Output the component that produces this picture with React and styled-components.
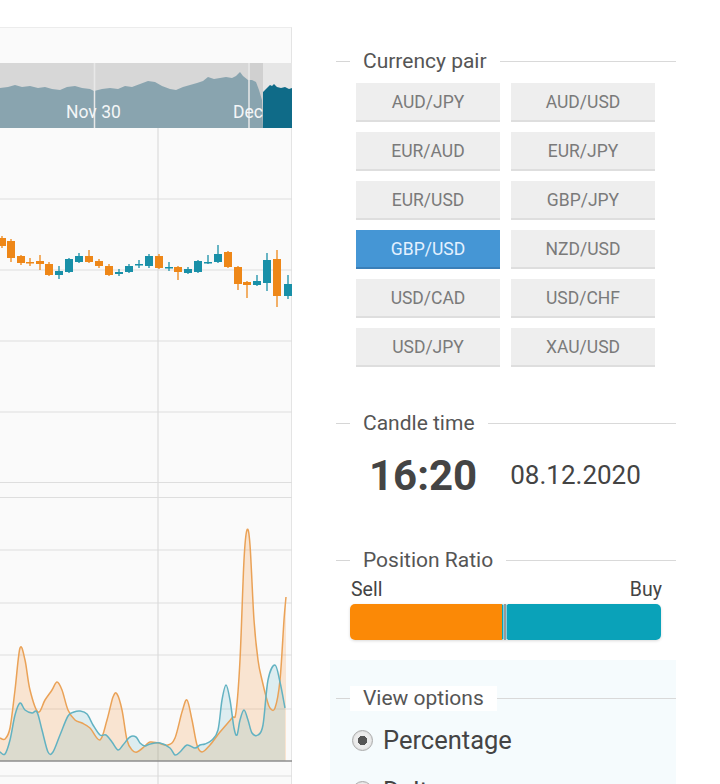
import React from 'react';
import styled, { createGlobalStyle } from 'styled-components';

const GlobalStyle = createGlobalStyle`
  html, body {
    margin: 0;
    padding: 0;
    background: #ffffff;
    font-family: Roboto, "Liberation Sans", Arial, sans-serif;
    overflow: hidden;
  }
`;

const PAIRS = [
  'AUD/JPY', 'AUD/USD', 'EUR/AUD', 'EUR/JPY', 'EUR/USD', 'GBP/JPY',
  'GBP/USD', 'NZD/USD', 'USD/CAD', 'USD/CHF', 'USD/JPY', 'XAU/USD',
];

// x, open, close, high, low
const CANDLES = [
  [2, 238, 246, 236, 248], [11, 241, 258, 239, 262], [21, 256, 263, 255, 265],
  [30, 262, 263, 258, 266], [40, 261, 264, 255, 270], [49, 264, 275, 262, 276],
  [59, 275, 271, 266, 279], [69, 272, 259, 258, 273], [79, 262, 256, 253, 263],
  [89, 256, 262, 250, 263], [99, 261, 266, 259, 268], [109, 266, 275, 264, 276],
  [119, 274, 272, 269, 276], [129, 272, 266, 264, 273], [139, 265, 264, 260, 268],
  [149, 266, 256, 254, 268], [159, 256, 268, 254, 269], [169, 268, 267, 262, 271],
  [178, 267, 272, 266, 280], [188, 273, 269, 267, 274], [198, 272, 261, 260, 273],
  [208, 263, 262, 255, 264], [218, 262, 254, 245, 263], [228, 252, 267, 251, 268],
  [238, 267, 284, 266, 290], [247, 282, 285, 281, 298], [257, 285, 281, 275, 286],
  [267, 283, 260, 253, 291], [277, 259, 296, 250, 307], [288, 296, 284, 275, 299],
];

const ORANGE_PTS = [
  [0, 738], [5, 739], [10, 728], [15, 690], [20, 648], [25, 660], [30, 690], [38, 712],
  [45, 700], [52, 690], [57, 682], [62, 690], [68, 710], [75, 720], [82, 723], [90, 728],
  [100, 740], [107, 720], [113, 697], [117, 694], [122, 710], [127, 740], [132, 750],
  [137, 752], [145, 746], [150, 742], [158, 743], [168, 745], [175, 738], [182, 712],
  [187, 700], [192, 720], [197, 745], [202, 752], [210, 745], [220, 732], [232, 718],
  [236, 712], [240, 660], [244, 560], [247, 530], [250, 545], [254, 620], [258, 660],
  [262, 680], [267, 700], [270, 708], [275, 708], [280, 680], [284, 620], [286, 597],
];

const TEAL_PTS = [
  [0, 752], [5, 754], [10, 740], [15, 715], [20, 703], [25, 710], [32, 713], [37, 712],
  [42, 730], [48, 752], [53, 752], [60, 735], [68, 716], [74, 712], [80, 711], [87, 714],
  [93, 725], [100, 735], [106, 735], [112, 742], [118, 750], [123, 745], [130, 737],
  [136, 737], [140, 743], [145, 746], [150, 744], [160, 743], [170, 748], [175, 755],
  [180, 752], [187, 745], [195, 748], [200, 745], [205, 744], [212, 740], [218, 730],
  [222, 700], [226, 685], [230, 700], [234, 728], [237, 735], [240, 720], [244, 710],
  [248, 720], [252, 733], [258, 735], [263, 725], [268, 680], [275, 665], [280, 682],
  [285, 708],
];

// smooth curve through points (catmull-rom -> bezier)
const smooth = (pts) => {
  let d = `M${pts[0][0]},${pts[0][1]}`;
  for (let i = 0; i < pts.length - 1; i++) {
    const p0 = pts[i - 1] || pts[i];
    const p1 = pts[i];
    const p2 = pts[i + 1];
    const p3 = pts[i + 2] || p2;
    const c1x = p1[0] + (p2[0] - p0[0]) / 6;
    const c1y = p1[1] + (p2[1] - p0[1]) / 6;
    const c2x = p2[0] - (p3[0] - p1[0]) / 6;
    const c2y = p2[1] - (p3[1] - p1[1]) / 6;
    d += ` C${c1x},${c1y} ${c2x},${c2y} ${p2[0]},${p2[1]}`;
  }
  return d;
};

const area = (pts, base) => {
  const last = pts[pts.length - 1];
  return `${smooth(pts)} L${last[0]},${base} L${pts[0][0]},${base} Z`;
};

const Page = () => (
  <Layout>
    <GlobalStyle />
    <ChartPanel>
      <Navigator />
      <PriceChart />
      <IndicatorChart />
    </ChartPanel>
    <SidePanel>
      <Section>
        <Legend title="Currency pair" />
        <PairGrid>
          {PAIRS.map((p) => (
            <PairButton key={p} $active={p === 'GBP/USD'}>{p}</PairButton>
          ))}
        </PairGrid>
      </Section>

      <Section $top={43}>
        <Legend title="Candle time" />
        <TimeRow>
          <Clock>16:20</Clock>
          <DateText>08.12.2020</DateText>
        </TimeRow>
      </Section>

      <Section $top={47}>
        <Legend title="Position Ratio" />
        <RatioLabels>
          <span>Sell</span>
          <span>Buy</span>
        </RatioLabels>
        <RatioBar>
          <SellPart style={{ width: '49%' }} />
          <BuyPart />
          <Cursor viewBox="0 0 10 40">
            <path d="M2 1h6M5 1v38M2 39h6" stroke="#fff" strokeWidth="3" fill="none" />
            <path d="M2 1h6M5 1v38M2 39h6" stroke="#555" strokeWidth="1.2" fill="none" />
          </Cursor>
        </RatioBar>
      </Section>

      <OptionsBox>
        <Legend title="View options" boxed />
        <RadioRow>
          <Radio $checked />
          <RadioLabel>Percentage</RadioLabel>
        </RadioRow>
        <RadioRow>
          <Radio />
          <RadioLabel>Delta</RadioLabel>
        </RadioRow>
      </OptionsBox>
    </SidePanel>
  </Layout>
);

const Legend = ({ title, boxed }) => (
  <LegendRow>
    <LegendStub />
    <LegendText $boxed={boxed}>{title}</LegendText>
    <LegendLine />
  </LegendRow>
);

const NAV_DARK =
  'M263,92 L266,89 L268,87 L270,85 L272,86 L274,84 L277,87 L281,88 L285,87 L289,89 L292,88 L292,128 L263,128 Z';

const Navigator = () => (
  <NavSvg viewBox="0 63 292 65" preserveAspectRatio="none">
    <rect x="0" y="63" width="292" height="65" fill="#d7d7d7" />
    <rect x="250" y="63" width="13" height="65" fill="#d0d0d0" />
    <rect x="263" y="63" width="29" height="65" fill="#e6e6e6" />
    <path
      d="M0,88 L8,87 L15,85 L22,87 L30,86 L38,88 L45,87 L52,89 L60,90 L67,87 L75,86 L82,88 L90,89 L94,91
         L102,89 L110,88 L118,89 L125,86 L132,87 L140,84 L148,81 L155,82 L162,86 L170,89 L176,90
         L183,87 L190,85 L197,83 L203,81 L208,77 L214,79 L220,78 L226,77 L232,78 L236,76 L240,72 L243,76
         L248,80 L252,80 L256,82 L259,90 L262,100 L263,128 L0,128 Z"
      fill="#89a4af"
    />
    <line x1="94.5" y1="63" x2="94.5" y2="128" stroke="#e8e8e8" strokeWidth="1.5" />
    <line x1="249" y1="63" x2="249" y2="128" stroke="#e8e8e8" strokeWidth="1.5" />
    <NavLabel x="66" y="118">Nov 30</NavLabel>
    <NavLabel x="233" y="118">Dec</NavLabel>
    <path d={NAV_DARK} fill="#0f6b88" />
  </NavSvg>
);

const PriceChart = () => (
  <PriceSvg viewBox="0 128 292 369" preserveAspectRatio="none">
    {[199, 270, 341, 412, 482.5].map((y) => (
      <line key={y} x1="0" y1={y} x2="292" y2={y} stroke="#dedede" strokeWidth="1.2" />
    ))}
    <line x1="158" y1="128" x2="158" y2="497" stroke="#dcdcdc" strokeWidth="1.2" />
    {CANDLES.map(([x, o, c, h, l]) => {
      const color = c > o ? '#ee8718' : '#1990a8';
      const top = Math.min(o, c);
      const height = Math.max(Math.abs(c - o), 1.5);
      return (
        <g key={x}>
          <line x1={x} y1={h} x2={x} y2={l} stroke={color} strokeWidth="1.3" />
          <rect x={x - 4} y={top} width="8" height={height} fill={color} />
        </g>
      );
    })}
  </PriceSvg>
);

const IndicatorChart = () => (
  <IndicatorSvg viewBox="0 497 292 287" preserveAspectRatio="none">
    {[497.5, 550, 603, 655, 709, 776].map((y) => (
      <line key={y} x1="0" y1={y} x2="292" y2={y} stroke="#dedede" strokeWidth="1.2" />
    ))}
    <line x1="158" y1="497" x2="158" y2="784" stroke="#dcdcdc" strokeWidth="1.2" />
    <path d={area(ORANGE_PTS, 761)} fill="rgba(246,160,80,0.24)" />
    <path d={area(TEAL_PTS, 761)} fill="rgba(90,175,195,0.18)" />
    <path d={smooth(ORANGE_PTS)} fill="none" stroke="#eaa257" strokeWidth="1.5" />
    <path d={smooth(TEAL_PTS)} fill="none" stroke="#62b2c2" strokeWidth="1.5" />
    <line x1="0" y1="761" x2="292" y2="761" stroke="#8e8e8e" strokeWidth="1.3" />
  </IndicatorSvg>
);

const Layout = styled.div`
  display: flex;
  align-items: flex-start;
  width: 720px;
  height: 784px;
  overflow: hidden;
`;

const ChartPanel = styled.div`
  width: 292px;
  height: 757px;
  margin-top: 27px;
  padding-top: 35px;
  box-sizing: border-box;
  background: #fafafa;
  border-top: 1px solid #ececec;
  border-right: 1px solid #e4e4e4;
  display: flex;
  flex-direction: column;
  flex-shrink: 0;
`;

const NavSvg = styled.svg`
  display: block;
  width: 292px;
  height: 65px;
`;

const NavLabel = styled.text`
  font-family: Roboto, "Liberation Sans", sans-serif;
  font-size: 17.5px;
  fill: #f4f6f7;
`;

const PriceSvg = styled.svg`
  display: block;
  width: 292px;
  height: 369px;
`;

const IndicatorSvg = styled.svg`
  display: block;
  width: 292px;
  height: 287px;
`;

const SidePanel = styled.div`
  margin-left: 41px;
  width: 343px;
  padding-top: 48px;
  display: flex;
  flex-direction: column;
`;

const Section = styled.div`
  display: flex;
  flex-direction: column;
  margin-top: ${(p) => p.$top || 0}px;
`;

const LegendRow = styled.div`
  display: flex;
  align-items: center;
  height: 26px;
  padding-left: 3px;
`;

const LegendStub = styled.div`
  width: 14px;
  height: 1px;
  background: #d6d6d6;
`;

const LegendText = styled.span`
  font-size: 21px;
  color: #555;
  padding: 0 13px;
  line-height: 25px;
  background: ${(p) => (p.$boxed ? '#ffffff' : 'transparent')};
`;

const LegendLine = styled.div`
  flex: 1;
  height: 1px;
  background: #d9d9d9;
`;

const PairGrid = styled.div`
  display: grid;
  grid-template-columns: 144px 144px;
  column-gap: 11px;
  row-gap: 10px;
  margin: 9px 0 0 23px;
`;

const PairButton = styled.div`
  height: 39px;
  box-sizing: border-box;
  display: flex;
  align-items: center;
  justify-content: center;
  font-size: 17.5px;
  color: ${(p) => (p.$active ? '#e3f1ff' : '#7a7a7a')};
  background: ${(p) => (p.$active ? '#4596d5' : '#eeeeee')};
  border-bottom: 2px solid ${(p) => (p.$active ? '#3a7fb8' : '#dedede')};
`;

const TimeRow = styled.div`
  display: flex;
  align-items: center;
  margin: 14px 0 0 36px;
  height: 50px;
  color: #444;
`;

const Clock = styled.span`
  font-size: 42px;
  font-weight: 700;
  color: #444;
`;

const DateText = styled.span`
  font-size: 26px;
  margin-left: 33px;
  color: #444;
`;

const RatioLabels = styled.div`
  display: flex;
  justify-content: space-between;
  width: 311px;
  margin: 7px 0 0 18px;
  font-size: 19.5px;
  color: #444;
  line-height: 20px;
`;

const RatioBar = styled.div`
  position: relative;
  display: flex;
  width: 311px;
  height: 36px;
  margin: 4px 0 0 17px;
  border-radius: 5px;
  overflow: hidden;
  box-shadow: 0 1px 3px rgba(0, 0, 0, 0.15);
`;

const SellPart = styled.div`
  background: #fb8906;
`;

const BuyPart = styled.div`
  flex: 1;
  background: #0aa2b9;
`;

const Cursor = styled.svg`
  position: absolute;
  left: 150px;
  top: -2px;
  width: 10px;
  height: 40px;
`;

const OptionsBox = styled.div`
  margin-top: 20px;
  margin-left: -3px;
  padding: 25px 0 0 3px;
  background: #f5fbfd;
  display: flex;
  flex-direction: column;
`;

const RadioRow = styled.div`
  display: flex;
  align-items: center;
  margin: 7px 0 0 19px;
  height: 44px;
`;

const Radio = styled.span`
  width: 19px;
  height: 19px;
  border-radius: 50%;
  border: 1.5px solid #aaa;
  background: ${(p) => (p.$checked ? 'radial-gradient(circle, #555 0 4.5px, #ececec 5px)' : '#efefef')};
  box-shadow: inset 0 0 2px rgba(0, 0, 0, 0.15);
`;

const RadioLabel = styled.span`
  font-size: 25.5px;
  color: #444;
  margin-left: 10px;
`;

export default Page;
